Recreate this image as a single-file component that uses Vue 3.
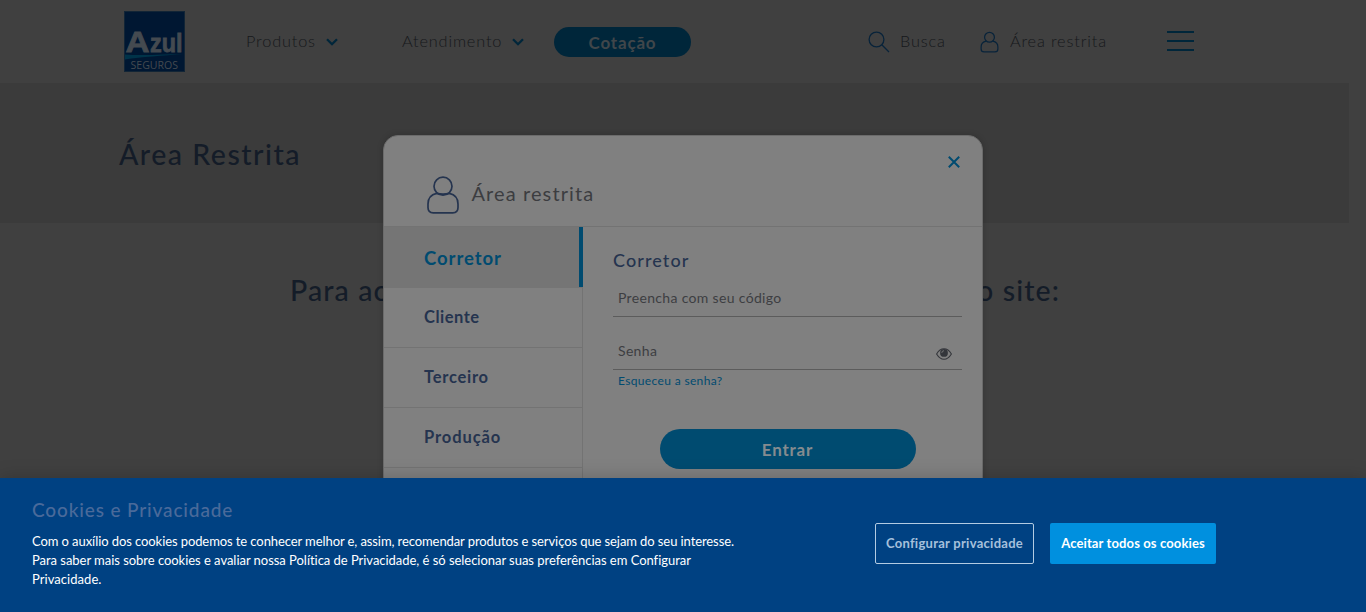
<script setup>
const tabs = ['Cliente', 'Terceiro', 'Produção']
</script>

<template>
  <div class="page">
    <header class="topbar">
      <svg class="logo" viewBox="0 0 61 61">
        <rect width="61" height="61" fill="#001732" />
        <rect x=".5" y=".5" width="60" height="60" fill="none" stroke="#122536" />
        <path d="M1 43.5C20 45 40 43 60 43C38 44.5 18 46 1 48.5Z" fill="#003349" />
        <text x="1.5" y="41.3" class="brand" font-size="30" textLength="24" lengthAdjust="spacingAndGlyphs">A</text>
        <text x="26" y="41.3" class="brand" font-size="25" textLength="32.5" lengthAdjust="spacingAndGlyphs">zul</text>
        <text x="6.5" y="57.5" class="brand-sub" font-size="10" textLength="47.5" lengthAdjust="spacingAndGlyphs">SEGUROS</text>
      </svg>
      <a class="nav produtos">Produtos</a>
      <svg class="chev c1" viewBox="0 0 12 8"><path d="M1 1.2 6 6.2 11 1.2" /></svg>
      <a class="nav atendimento">Atendimento</a>
      <svg class="chev c2" viewBox="0 0 12 8"><path d="M1 1.2 6 6.2 11 1.2" /></svg>
      <a class="quote"><span>Cotação</span></a>
      <svg class="search" viewBox="0 0 22 22"><circle cx="8.5" cy="8.5" r="7.4" /><path d="M13.8 13.8 21 21" /></svg>
      <a class="nav busca">Busca</a>
      <svg class="user-sm" viewBox="0 0 34 38">
        <circle cx="17" cy="10.5" r="8.8" />
        <path d="M11 17.3C5 18.5 2 22.7 2 28v3.5Q2 36.7 7.2 36.7H26.8Q32 36.7 32 31.5V28C32 22.7 29 18.5 23 17.3" />
      </svg>
      <a class="nav area">Área restrita</a>
      <div class="burger"><i /><i /><i /></div>
    </header>
    <section class="banner"><h1>Área Restrita</h1></section>
    <div class="intro"><span class="intro-start">Para ac</span><span class="intro-end">o site:</span></div>

    <main class="modal">
      <div class="modal-head">
        <svg class="user-lg" viewBox="0 0 34 38">
          <circle cx="17" cy="10.2" r="9" />
          <path d="M10.6 17.3C5 18.5 2 22.7 2 28v3.5Q2 36.8 7.2 36.8H26.8Q32 36.8 32 31.5V28C32 22.7 29 18.5 23.4 17.3Q17 18.8 10.6 17.3" />
        </svg>
        <h2>Área restrita</h2>
        <svg class="close" viewBox="0 0 12 12"><path d="M.8.8 11.2 11.2M11.2.8.8 11.2" /></svg>
      </div>
      <div class="modal-body">
        <nav class="tabs">
          <div class="tab active"><span>Corretor</span></div>
          <div v-for="(t, i) in tabs" :key="t" class="tab" :class="'t' + i"><span>{{ t }}</span></div>
        </nav>
        <div class="form">
          <h3>Corretor</h3>
          <div class="field code"><span>Preencha com seu código</span></div>
          <div class="field pass">
            <span>Senha</span>
            <svg class="eye" viewBox="0 0 16 12">
              <path d="M.6 6Q3.7 .8 8 .8T15.4 6Q12.3 11.2 8 11.2T.6 6Z" fill="none" stroke="#34363b" stroke-width="1.1" />
              <circle cx="8" cy="4.9" r="3.9" fill="#34363b" />
              <path d="M5.8 4.9Q5.8 2.8 8 2.7" fill="none" stroke="#808080" stroke-width=".8" />
            </svg>
          </div>
          <a class="forgot">Esqueceu a senha?</a>
          <button class="enter"><span>Entrar</span></button>
        </div>
      </div>
    </main>

    <aside class="cookies">
      <div class="cookie-copy">
        <h4>Cookies e Privacidade</h4>
        <p class="l1">Com o auxílio dos cookies podemos te conhecer melhor e, assim, recomendar produtos e serviços que sejam do seu interesse.</p>
        <p class="l2">Para saber mais sobre cookies e avaliar nossa Política de Privacidade, é só selecionar suas preferências em Configurar</p>
        <p class="l3">Privacidade.</p>
      </div>
      <button class="config"><span>Configurar privacidade</span></button>
      <button class="accept"><span>Aceitar todos os cookies</span></button>
    </aside>
  </div>
</template>

<style>
body { margin: 0; overflow: hidden; }
</style>

<style scoped>
* { box-sizing: border-box; }
.page { position: relative; width: 1366px; height: 612px; overflow: hidden; background: #404040; font-family: Lato, "Open Sans", sans-serif; }
h1, h2, h3, h4, p { margin: 0; font-weight: 400; white-space: nowrap; }
svg { display: block; flex: none; overflow: visible; }
span, a { white-space: nowrap; }
button { border: 0; padding: 0; font-family: inherit; flex: none; }
.topbar { height: 83px; display: flex; align-items: flex-start; padding-left: 124px; }
.logo { width: 61px; height: 61px; margin-top: 11px; }
.brand { font-family: "Liberation Sans", sans-serif; font-weight: 700; fill: #444a50; stroke: #444a50; stroke-width: .8; }
.brand-sub { font-family: "Open Sans", sans-serif; fill: #444a50; }
.nav { flex: none; margin-top: 31px; font-size: 16.3px; font-weight: 300; line-height: 20px; color: #16181b; letter-spacing: .85px; }
.produtos { margin-left: 61px; width: 80px; }
.chev { width: 12px; height: 8px; margin-top: 38px; }
.chev path { fill: none; stroke: #00263a; stroke-width: 2.3; }
.atendimento { margin-left: 64px; width: 110px; }
.quote { width: 137px; height: 30px; margin: 27px 0 0 30px; border-radius: 15px; background: #00263a; color: #40464a; font-size: 17px; font-weight: 700; line-height: 31px; text-align: center; letter-spacing: .8px; }
.search { width: 22px; height: 22px; margin: 31px 0 0 177px; }
.search circle, .search path, .user-sm * { fill: none; stroke: #08233a; stroke-width: 1.3; }
.busca { margin-left: 10px; width: 80px; }
.user-sm { width: 19px; height: 22px; margin-top: 31px; }
.user-sm * { stroke-width: 2.2; }
.area { margin-left: 11px; width: 157px; }
.burger { width: 27px; height: 20px; margin-top: 31px; display: flex; flex-direction: column; justify-content: space-between; }
.burger i { height: 2px; background: #00263a; }
.banner { width: 1349px; height: 140px; background: #3b3b3b; padding: 53px 0 0 119px; }
h1 { font-size: 28.5px; font-weight: 500; line-height: 36px; color: #141c28; letter-spacing: 1.5px; }
.intro { width: 770px; margin: 49px 0 0 290px; display: flex; justify-content: space-between; font-size: 28.5px; font-weight: 500; line-height: 36px; color: #141c28; letter-spacing: 1.1px; }
.modal { position: absolute; left: 383px; top: 135px; width: 600px; height: 400px; border: 1px solid #6b6b6b; border-radius: 15px 15px 0 0; background: #808080; box-shadow: 0 0 6px rgba(0, 0, 0, .18); }
.modal-head { height: 91px; border-bottom: 1px solid #737373; display: flex; align-items: flex-start; padding-left: 42px; }
.user-lg { width: 34px; height: 38px; margin-top: 40px; }
.user-lg * { fill: none; stroke: #25344f; stroke-width: 1.7; }
h2 { font-size: 20px; line-height: 26px; margin: 44px 0 0 11.5px; color: #3c3d40; letter-spacing: 1.1px; }
.close { width: 12px; height: 12px; margin: 20px 22px 0 auto; }
.close path { fill: none; stroke: #004b70; stroke-width: 2; }
.modal-body { display: flex; height: 308px; }
.tabs { width: 199px; border-right: 1px solid #737373; flex: none; }
.tab { height: 60px; border-bottom: 1px solid #737373; padding: 0 0 2px 40px; display: flex; align-items: center; font-size: 16.5px; font-weight: 700; color: #25344f; letter-spacing: .5px; }
.t1 { letter-spacing: .75px; }
.t2 { letter-spacing: .9px; }
.tab.active { width: 199px; height: 61px; position: relative; background: #757575; border-bottom: 0; font-size: 18.5px; color: #004b70; padding-bottom: 0; letter-spacing: .95px; }
.tab.active::after { content: ""; position: absolute; right: 0; top: 0; width: 4px; height: 60px; background: #004b70; }
.form { flex: 1; padding: 21px 20px 0 30px; }
h3 { font-size: 18px; line-height: 24px; margin-bottom: 1px; color: #25344f; letter-spacing: 1.1px; font-weight: 500; }
.field { width: 349px; border-bottom: 1px solid #5c5c5c; font-size: 14px; line-height: 20px; color: #3d3e42; display: flex; justify-content: space-between; padding-left: 5px; letter-spacing: .33px; }
.code { height: 44px; padding-top: 15px; }
.pass { height: 53px; padding-top: 24px; }
.eye { width: 16px; height: 12px; margin: 7px 10.5px 0 0; }
.forgot { display: block; margin-left: 5px; margin-top: 3px; font-size: 12px; line-height: 16px; color: #004b70; letter-spacing: .35px; }
.enter { display: block; width: 256px; height: 40px; margin: 40px 0 0 47px; padding: 0 1px 0 0; border-radius: 20px; background: #004b70; color: #858b8f; font-size: 17px; font-weight: 700; letter-spacing: .8px; }
.cookies { position: absolute; left: 0; top: 478px; width: 1366px; height: 134px; background: #004182; box-shadow: 0 0 18px rgba(0, 0, 0, .2); display: flex; padding-left: 32px; }
.cookie-copy { width: 843px; padding-top: 19px; flex: none; }
h4 { font-size: 19px; font-weight: 500; line-height: 25px; margin-bottom: 10px; color: #4a6a9a; letter-spacing: .86px; }
p { font-size: 13px; line-height: 19px; color: #fff; }
.l1 { letter-spacing: -.09px; }
.l2 { letter-spacing: -.035px; }
.l3 { letter-spacing: .05px; }
.config, .accept { margin-top: 45px; height: 41px; padding-bottom: 2px; border-radius: 2px; font-size: 13px; font-weight: 700; }
.config { width: 159px; border: 1px solid #b3cbe2; background: #004182; color: #a6c0dc; letter-spacing: .27px; }
.accept { width: 166px; margin-left: 16px; background: #0090df; color: #fff; letter-spacing: .12px; }
</style>
